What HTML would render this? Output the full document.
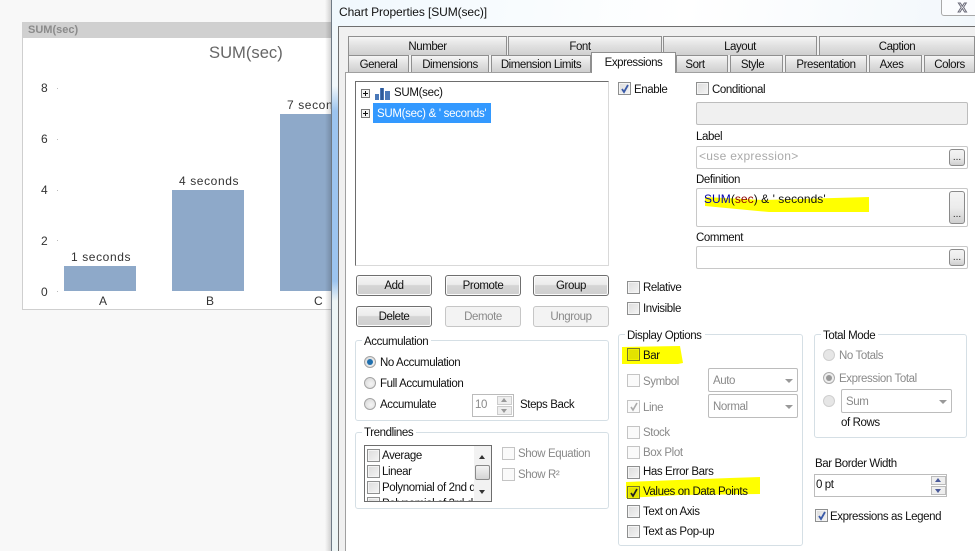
<!DOCTYPE html>
<html>
<head>
<meta charset="utf-8">
<style>
html,body{margin:0;padding:0;width:975px;height:551px;overflow:hidden;background:#f8f8f8}
body{position:relative;font-family:"Liberation Sans",sans-serif;font-size:11.5px;letter-spacing:-.4px;color:#111}
div{position:absolute;box-sizing:border-box}
.t{white-space:nowrap;line-height:14px;height:14px;margin-top:1px}
.d{color:#8a8a8a}
.tab{background:linear-gradient(#f5f5f5,#e2e2e2 45%,#cfcfcf);border:1px solid #8f8f8f;border-bottom:none;text-align:center;line-height:18px;white-space:nowrap;letter-spacing:-.45px}
.btn{border:1px solid #6f6f6f;border-radius:3px;background:linear-gradient(#f4f4f4,#ececec 45%,#d5d5d5 50%,#cfcfcf);text-align:center;line-height:21px;height:21px;width:76px;box-shadow:inset 0 0 0 1px #fbfbfb}
.btn.x{border-color:#c6c6c6;background:#f3f3f3;color:#8a8a8a;box-shadow:none}
.sb{border:1px solid #8a8a8a;border-radius:3px;background:linear-gradient(#f4f4f4,#ececec 50%,#cfcfcf);width:16px;text-align:center;line-height:20px;font-size:10px;color:#222;letter-spacing:0}
.g{border:1px solid #d5dfe5;border-radius:3px}
.l{background:#fff;padding:0 3px 0 2px;line-height:14px;white-space:nowrap;margin-top:1px}
.i{background:#fff;border:1px solid #c8c8c8;border-radius:2px}
.cb{width:13px;height:13px;border:1px solid #8e8f8f;background:linear-gradient(135deg,#dcdcdc,#f4f4f4);box-shadow:inset 0 0 0 1px #f4f4f4}
.cb.x{border-color:#c4c4c4;background:#fafafa;box-shadow:none}
.cb svg{position:absolute;left:1px;top:0}
.r{width:12px;height:12px;border-radius:50%;border:1px solid #a4a4a4;background:radial-gradient(circle at 60% 60%,#f5f5f5,#d4d4d4)}
.r.x{border-color:#cfcfcf;background:#e6e6e6}
.r i{position:absolute;left:2px;top:2px;width:6px;height:6px;border-radius:50%;background:#1f6fae}
.dd{background:#fff;border:1px solid #bcbcbc;border-radius:2px;color:#8a8a8a;padding-left:4px;line-height:24px;height:24px}
.dd:after{content:"";position:absolute;right:4px;top:10px;border:4px solid transparent;border-top:4px solid #999;border-bottom:none}
.pm{width:9px;height:9px;border:1px solid #777;background:#f3f3f3}
.pm:before{content:"";position:absolute;left:1px;top:3px;width:5px;height:1px;background:#111}
.pm:after{content:"";position:absolute;left:3px;top:1px;width:1px;height:5px;background:#111}
.ax{color:#333;font-size:12px;letter-spacing:.6px;margin-top:0}
.z{margin-top:0}
</style>
</head>
<body>
<!-- Chart object -->
<div style="left:22px;top:22px;width:320px;height:288px;background:#fff;border:1px solid #cfcfcf"></div>
<div style="left:23px;top:23px;width:310px;height:15px;background:#d0d0d0"></div>
<div class="t z" style="left:28px;top:23px;font-size:11px;font-weight:bold;color:#8b8b8b;letter-spacing:0">SUM(sec)</div>
<div class="t z" style="left:209px;top:44px;font-size:16.6px;height:18px;line-height:18px;color:#666;letter-spacing:0">SUM(sec)</div>
<div class="t ax" style="left:41px;top:81px">8</div>
<div class="t ax" style="left:41px;top:132px">6</div>
<div class="t ax" style="left:41px;top:183px">4</div>
<div class="t ax" style="left:41px;top:234px">2</div>
<div class="t ax" style="left:41px;top:285px">0</div>
<div style="left:57px;top:88px;width:1px;height:1px;background:#bbb"></div>
<div style="left:57px;top:139px;width:1px;height:1px;background:#bbb"></div>
<div style="left:57px;top:190px;width:1px;height:1px;background:#bbb"></div>
<div style="left:57px;top:240px;width:1px;height:1px;background:#bbb"></div>
<div style="left:57px;top:291px;width:1px;height:1px;background:#bbb"></div>
<div style="left:64px;top:266px;width:72px;height:25px;background:#8ea9c9"></div>
<div style="left:172px;top:190px;width:72px;height:101px;background:#8ea9c9"></div>
<div style="left:280px;top:114px;width:60px;height:177px;background:#8ea9c9"></div>
<div class="t ax" style="left:71px;top:250px">1 seconds</div>
<div class="t ax" style="left:179px;top:174px">4 seconds</div>
<div class="t ax" style="left:287px;top:98px">7 seconds</div>
<div class="t z" style="left:99px;top:294px;color:#333;font-size:12px;letter-spacing:0">A</div>
<div class="t z" style="left:206px;top:294px;color:#333;font-size:12px;letter-spacing:0">B</div>
<div class="t z" style="left:314px;top:294px;color:#333;font-size:12px;letter-spacing:0">C</div>

<!-- Dialog frame -->
<div style="left:325px;top:0;width:6px;height:551px;background:linear-gradient(90deg,rgba(0,0,0,0),rgba(0,0,0,.16))"></div>
<div style="left:331px;top:0;width:1px;height:551px;background:#6f7a85"></div>
<div style="left:332px;top:0;width:643px;height:26px;background:linear-gradient(100deg,#f0f8fd,#fff 55%,#f2f7fb)"></div>
<div style="left:332px;top:26px;width:6px;height:525px;background:linear-gradient(#f2f8fb 0,#f2f8fb 60px,#9cc4ef 85px,#9cc4ef 255px,#eef5f5 275px,#eef5f5 100%)"></div>
<div class="t z" style="left:339px;top:5px;font-size:12px;letter-spacing:-.1px;color:#111">Chart Properties [SUM(sec)]</div>
<div style="left:941px;top:-4px;width:40px;height:20px;border:1px solid #a9a9a9;border-radius:3px;background:#fbfcfe"></div>
<div class="t z" style="left:958px;top:1px;font-size:13px;font-weight:bold;color:#fff;-webkit-text-stroke:1px #6a6a78;letter-spacing:0">X</div>
<div style="left:338px;top:26px;width:637px;height:525px;background:#f0f0f0;border-left:1px solid #6f6f6f;border-top:1px solid #6f6f6f"></div>
<div style="left:345px;top:72px;width:630px;height:479px;background:#fff;border-left:1px solid #a0a0a0;border-top:1px solid #a0a0a0"></div>

<!-- Tabs -->
<div class="tab" style="left:348px;top:36px;width:159px;height:19px;line-height:20px">Number</div>
<div class="tab" style="left:508px;top:36px;width:154px;height:19px;line-height:20px;padding-right:10px">Font</div>
<div class="tab" style="left:663px;top:36px;width:154px;height:19px;line-height:20px">Layout</div>
<div class="tab" style="left:819px;top:36px;width:156px;height:19px;line-height:20px">Caption</div>
<div class="tab" style="left:348px;top:55px;width:61px;height:17px">General</div>
<div class="tab" style="left:411px;top:55px;width:78px;height:17px">Dimensions</div>
<div class="tab" style="left:491px;top:55px;width:100px;height:17px">Dimension Limits</div>
<div class="tab" style="left:676px;top:55px;width:52px;height:17px;padding-right:14px">Sort</div>
<div class="tab" style="left:730px;top:55px;width:53px;height:17px;padding-right:8px">Style</div>
<div class="tab" style="left:785px;top:55px;width:82px;height:17px">Presentation</div>
<div class="tab" style="left:869px;top:55px;width:53px;height:17px;padding-right:8px">Axes</div>
<div class="tab" style="left:924px;top:55px;width:51px;height:17px">Colors</div>
<div class="tab" style="left:591px;top:52px;width:85px;height:21px;background:#fff;line-height:20px">Expressions</div>

<!-- Tree -->
<div style="left:355px;top:81px;width:254px;height:185px;background:#fff;border:1px solid #d9d9d9;border-top:1px solid #6d6d6d;border-left:1px solid #6d6d6d"></div>
<div class="pm" style="left:361px;top:89px"></div>
<svg style="position:absolute;left:375px;top:85px" width="16" height="15"><path d="M0 9h4v6H0zM5 3h4v12H5zM10 6h5v9h-5z" fill="#4a78b8"/><path d="M6 3h2v12H6z" fill="#2f5a98"/></svg>
<div class="t" style="left:394px;top:85px;letter-spacing:-.3px">SUM(sec)</div>
<div class="pm" style="left:361px;top:109px"></div>
<div style="left:373px;top:103px;width:118px;height:20px;background:#3399ff"></div>
<div class="t" style="left:377px;top:106px;color:#fff;letter-spacing:-.3px">SUM(sec) &amp; ' seconds'</div>

<!-- Buttons -->
<div class="btn" style="left:356px;top:275px">Add</div>
<div class="btn" style="left:445px;top:275px">Promote</div>
<div class="btn" style="left:533px;top:275px">Group</div>
<div class="btn" style="left:356px;top:306px">Delete</div>
<div class="btn x" style="left:445px;top:306px">Demote</div>
<div class="btn x" style="left:533px;top:306px">Ungroup</div>

<!-- Accumulation -->
<div class="g" style="left:355px;top:340px;width:254px;height:81px"></div>
<div class="l" style="left:362px;top:334px">Accumulation</div>
<div class="r" style="left:364px;top:356px"><i></i></div>
<div class="t" style="left:380px;top:355px">No Accumulation</div>
<div class="r" style="left:364px;top:377px"></div>
<div class="t" style="left:380px;top:376px">Full Accumulation</div>
<div class="r" style="left:364px;top:398px"></div>
<div class="t" style="left:380px;top:397px">Accumulate</div>
<div style="left:472px;top:394px;width:42px;height:23px;border:1px solid #bbb;background:#fff"></div>
<div class="t d" style="left:475px;top:397px">10</div>
<div style="left:497px;top:396px;width:15px;height:9px;background:#eee;border:1px solid #ccc"></div>
<div style="left:497px;top:406px;width:15px;height:9px;background:#eee;border:1px solid #ccc"></div>
<div style="left:501px;top:398px;border:3px solid transparent;border-bottom:4px solid #999;border-top:none"></div>
<div style="left:501px;top:409px;border:3px solid transparent;border-top:4px solid #999;border-bottom:none"></div>
<div class="t" style="left:520px;top:397px">Steps Back</div>

<!-- Trendlines -->
<div class="g" style="left:355px;top:432px;width:254px;height:77px"></div>
<div class="l" style="left:362px;top:425px">Trendlines</div>
<div style="left:364px;top:445px;width:128px;height:57px;background:#fff;border:1px solid #6d6d6d;overflow:hidden">
  <div class="cb" style="left:2px;top:3px"></div>
  <div class="t" style="left:17px;top:2px">Average</div>
  <div class="cb" style="left:2px;top:19px"></div>
  <div class="t" style="left:17px;top:18px">Linear</div>
  <div class="cb" style="left:2px;top:35px"></div>
  <div class="t" style="left:17px;top:34px;width:93px;overflow:hidden">Polynomial of 2nd degree</div>
  <div class="cb" style="left:2px;top:51px"></div>
  <div class="t" style="left:17px;top:50px;width:93px;overflow:hidden">Polynomial of 3rd degree</div>
  <div style="left:109px;top:0;width:17px;height:55px;background:#f2f2f2"></div>
  <div style="left:110px;top:19px;width:15px;height:15px;background:linear-gradient(#f3f3f3,#d4d4d4);border:1px solid #8a8a8a;border-radius:2px"></div>
  <div style="left:114px;top:9px;border:3px solid transparent;border-bottom:4px solid #333;border-top:none"></div>
  <div style="left:114px;top:44px;border:3px solid transparent;border-top:4px solid #333;border-bottom:none"></div>
</div>
<div class="cb x" style="left:502px;top:447px"></div>
<div class="t d" style="left:518px;top:446px">Show Equation</div>
<div class="cb x" style="left:502px;top:468px"></div>
<div class="t d" style="left:518px;top:467px">Show R²</div>

<!-- Relative etc -->
<div class="cb" style="left:627px;top:281px"></div>
<div class="t" style="left:643px;top:280px">Relative</div>
<div class="cb" style="left:627px;top:302px"></div>
<div class="t" style="left:643px;top:301px">Invisible</div>

<!-- Display Options -->
<div class="g" style="left:618px;top:334px;width:185px;height:212px"></div>
<div class="l" style="left:625px;top:328px">Display Options</div>
<svg style="position:absolute;left:620px;top:343px" width="145" height="160"><path d="M2 4L60 3L63 20L58 21L2 21Z" fill="#ffff00"/><path d="M6 139L110 135L140 134L140 151L60 152L6 155Z" fill="#ffff00"/></svg>
<div class="cb" style="left:627px;top:348px;background:#e3e300;box-shadow:inset 0 0 0 1px #f0f000;border-color:#77772a"></div>
<div class="t" style="left:643px;top:348px">Bar</div>
<div class="cb x" style="left:627px;top:374px"></div>
<div class="t d" style="left:643px;top:374px">Symbol</div>
<div class="cb x" style="left:627px;top:400px"><svg width="11" height="11"><path d="M2 6l2 3l4-7" fill="none" stroke="#aaa" stroke-width="1.6"/></svg></div>
<div class="t d" style="left:643px;top:400px">Line</div>
<div class="cb x" style="left:627px;top:426px"></div>
<div class="t d" style="left:643px;top:425px">Stock</div>
<div class="cb x" style="left:627px;top:446px"></div>
<div class="t d" style="left:643px;top:445px">Box Plot</div>
<div class="cb" style="left:627px;top:466px"></div>
<div class="t" style="left:643px;top:464px">Has Error Bars</div>
<div class="cb" style="left:627px;top:486px;background:#e3e300;box-shadow:inset 0 0 0 1px #f0f000;border-color:#77772a"><svg width="11" height="11"><path d="M2 6l2 3l4-7" fill="none" stroke="#222" stroke-width="1.7"/></svg></div>
<div class="t" style="left:643px;top:484px">Values on Data Points</div>
<div class="cb" style="left:627px;top:505px"></div>
<div class="t" style="left:643px;top:504px">Text on Axis</div>
<div class="cb" style="left:627px;top:525px"></div>
<div class="t" style="left:643px;top:524px">Text as Pop-up</div>
<div class="dd" style="left:708px;top:368px;width:90px">Auto</div>
<div class="dd" style="left:708px;top:394px;width:90px">Normal</div>

<!-- Total mode -->
<div class="g" style="left:814px;top:334px;width:153px;height:104px"></div>
<div class="l" style="left:821px;top:328px">Total Mode</div>
<div class="r x" style="left:823px;top:349px"></div>
<div class="t d" style="left:839px;top:348px">No Totals</div>
<div class="r x" style="left:823px;top:372px;background:#eee;border-color:#aaa"><i style="background:#999"></i></div>
<div class="t d" style="left:839px;top:371px">Expression Total</div>
<div class="r x" style="left:823px;top:395px"></div>
<div class="dd" style="left:841px;top:389px;width:111px">Sum</div>
<div class="t" style="left:841px;top:415px">of Rows</div>

<div class="t" style="left:815px;top:456px">Bar Border Width</div>
<div style="left:814px;top:474px;width:133px;height:23px;background:#fff;border:1px solid #bcbcbc"></div>
<div class="t" style="left:816px;top:477px">0 pt</div>
<div style="left:931px;top:476px;width:15px;height:9px;background:#eee;border:1px solid #bbb"></div>
<div style="left:931px;top:486px;width:15px;height:9px;background:#eee;border:1px solid #bbb"></div>
<div style="left:935px;top:478px;border:3px solid transparent;border-bottom:4px solid #4a5a9a;border-top:none"></div>
<div style="left:935px;top:489px;border:3px solid transparent;border-top:4px solid #4a5a9a;border-bottom:none"></div>
<div class="cb" style="left:815px;top:509px"><svg width="11" height="11"><path d="M2 6l2 3l4-7" fill="none" stroke="#3a5aa8" stroke-width="1.8"/></svg></div>
<div class="t" style="left:830px;top:509px">Expressions as Legend</div>

<!-- Right column -->
<div class="cb" style="left:618px;top:82px"><svg width="11" height="11"><path d="M2 6l2 3l4-7" fill="none" stroke="#3a5aa8" stroke-width="1.8"/></svg></div>
<div class="t" style="left:634px;top:82px">Enable</div>
<div class="cb" style="left:696px;top:82px"></div>
<div class="t" style="left:712px;top:82px">Conditional</div>
<div class="i" style="left:696px;top:102px;width:272px;height:23px;background:#f0f0f0;border-color:#bdbdbd"></div>
<div class="t" style="left:696px;top:129px">Label</div>
<div class="i" style="left:696px;top:146px;width:272px;height:23px"></div>
<div class="t z" style="left:699px;top:149px;color:#aaa;font-size:12px;letter-spacing:.3px">&lt;use expression&gt;</div>
<div class="sb" style="left:949px;top:149px;height:17px;line-height:16px">...</div>
<div class="t" style="left:696px;top:172px">Definition</div>
<div class="i" style="left:696px;top:188px;width:272px;height:39px"></div>
<svg style="position:absolute;left:704px;top:194px" width="168" height="22"><path d="M1 3L60 6L165 3L165 18L65 18L1 12Z" fill="#ffff00"/></svg>
<div class="t z" style="left:704px;top:192px;font-size:12px;letter-spacing:.05px"><span style="color:#00a">SUM</span>(<span style="color:#8b0000">sec</span>) &amp; ' seconds'</div>
<div class="sb" style="left:949px;top:191px;height:33px;line-height:46px">...</div>
<div class="t" style="left:696px;top:230px">Comment</div>
<div class="i" style="left:696px;top:246px;width:272px;height:23px"></div>
<div class="sb" style="left:949px;top:249px;height:17px;line-height:16px">...</div>
</body>
</html>
